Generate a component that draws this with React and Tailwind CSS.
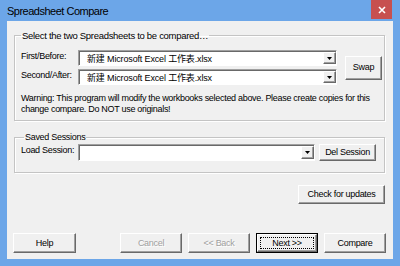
import React from 'react';

const raised =
  'border border-t-white border-l-white border-r-[#696969] border-b-[#696969] shadow-[inset_-1px_-1px_0_#a0a0a0] bg-[#f0f0f0]';

function Button({ label, className = '', disabled = false, focused = false }) {
  if (focused) {
    return (
      <div className={`border border-black bg-[#f0f0f0] flex ${className}`}>
        <div className={`${raised} flex-1 flex p-[2px]`}>
          <div className="flex-1 border border-dotted border-black flex items-center justify-center">
            {label}
          </div>
        </div>
      </div>
    );
  }
  return (
    <div
      className={`${raised} flex items-center justify-center ${
        disabled ? 'text-[#a0a0a0] [text-shadow:1px_1px_0_#fff]' : ''
      } ${className}`}
    >
      {label}
    </div>
  );
}

function Combo({ value, className = '' }) {
  return (
    <div
      className={`border border-t-[#a0a0a0] border-l-[#a0a0a0] border-r-white border-b-white shadow-[inset_1px_1px_0_#696969] bg-white flex ${className}`}
    >
      <div className="flex-1 pl-[8px] pt-[1px] flex items-center text-[9px] leading-[12px] tracking-[-0.15px] font-['Liberation_Sans','Noto_Sans_CJK_SC',sans-serif] whitespace-nowrap overflow-hidden">
        {value}
      </div>
      <div className={`${raised} w-[13px] my-[1px] flex items-center justify-center`}>
        <svg width="5" height="3" viewBox="0 0 5 3">
          <path d="M0 0h5L2.5 3z" fill="#000" />
        </svg>
      </div>
    </div>
  );
}

export default function App() {
  const file = '新建 Microsoft Excel 工作表.xlsx';

  return (
    <div className="w-[400px] h-[266px] bg-[#6ca6e8] flex flex-col overflow-hidden text-black font-['Liberation_Sans',sans-serif] text-[9px] leading-[11px] tracking-[-0.3px]">
      {/* title bar */}
      <div className="h-[21px] flex items-start justify-between">
        <span className="pl-[7px] pt-[4px] text-[11px] leading-[14px] tracking-[-0.5px] text-[#000]">
          Spreadsheet Compare
        </span>
        <div className="w-[21px] h-[19px] mr-[8px] bg-[#c7504f] flex items-center justify-center">
          <svg width="8" height="8" viewBox="0 0 8 8">
            <path d="M1 1l6 6M7 1L1 7" stroke="#fff" strokeWidth="1.6" />
          </svg>
        </div>
      </div>

      {/* client area */}
      <div className="flex-1 mx-[7px] mb-[7px] bg-[#f0f0f0] flex flex-col pl-[7px] pr-[8px] pt-[8px] pb-[6px]">
        <fieldset className="border border-[#c4c4c4] shadow-[inset_1px_1px_0_#fff,1px_1px_0_#fff] pl-[6px] pr-[2px] pb-[5px]">
          <legend className="px-[1px] text-[9.5px] leading-[13px]">
            Select the two Spreadsheets to be compared…
          </legend>
          <div className="flex items-center pt-[8px]">
            <div className="flex flex-col gap-[3px]">
              <div className="flex items-center">
                <span className="w-[57px] self-start leading-[12px]">First/Before:</span>
                <Combo value={file} className="w-[259px] h-[16px]" />
              </div>
              <div className="flex items-center">
                <span className="w-[57px] self-start leading-[12px]">Second/After:</span>
                <Combo value={file} className="w-[259px] h-[16px]" />
              </div>
            </div>
            <Button label="Swap" className="ml-[8px] w-[37px] h-[24px]" />
          </div>
          <p className="mt-[8px] leading-[11px] whitespace-nowrap">
            Warning: This program will modify the workbooks selected above. Please create copies for this
            <br />
            change compare. Do NOT use originals!
          </p>
        </fieldset>

        <fieldset className="mt-[10px] border border-[#c4c4c4] shadow-[inset_1px_1px_0_#fff,1px_1px_0_#fff] pl-[6px] pr-[2px] pb-[11px]">
          <legend className="ml-[3px] px-[1px] text-[9px] leading-[13px]">Saved Sessions</legend>
          <div className="flex items-center">
            <span className="w-[57px] self-start leading-[12px]">Load Session:</span>
            <Combo value="" className="w-[237px] h-[17px]" />
            <Button label="Del Session" className="ml-[4px] w-[57px] h-[17px]" />
          </div>
        </fieldset>

        <div className="flex justify-end mt-[12px]">
          <Button label="Check for updates" className="w-[87px] h-[19px]" />
        </div>

        <div className="mt-auto flex items-end">
          <Button label="Help" className="-ml-[1px] w-[63px] h-[20px]" />
          <div className="ml-auto flex gap-[6px] -mr-[1px]">
            <Button label="Cancel" disabled className="w-[62px] h-[20px]" />
            <Button label="<< Back" disabled className="w-[62px] h-[20px]" />
            <Button label="Next >>" focused className="w-[62px] h-[20px]" />
            <Button label="Compare" className="w-[62px] h-[20px]" />
          </div>
        </div>
      </div>
    </div>
  );
}
